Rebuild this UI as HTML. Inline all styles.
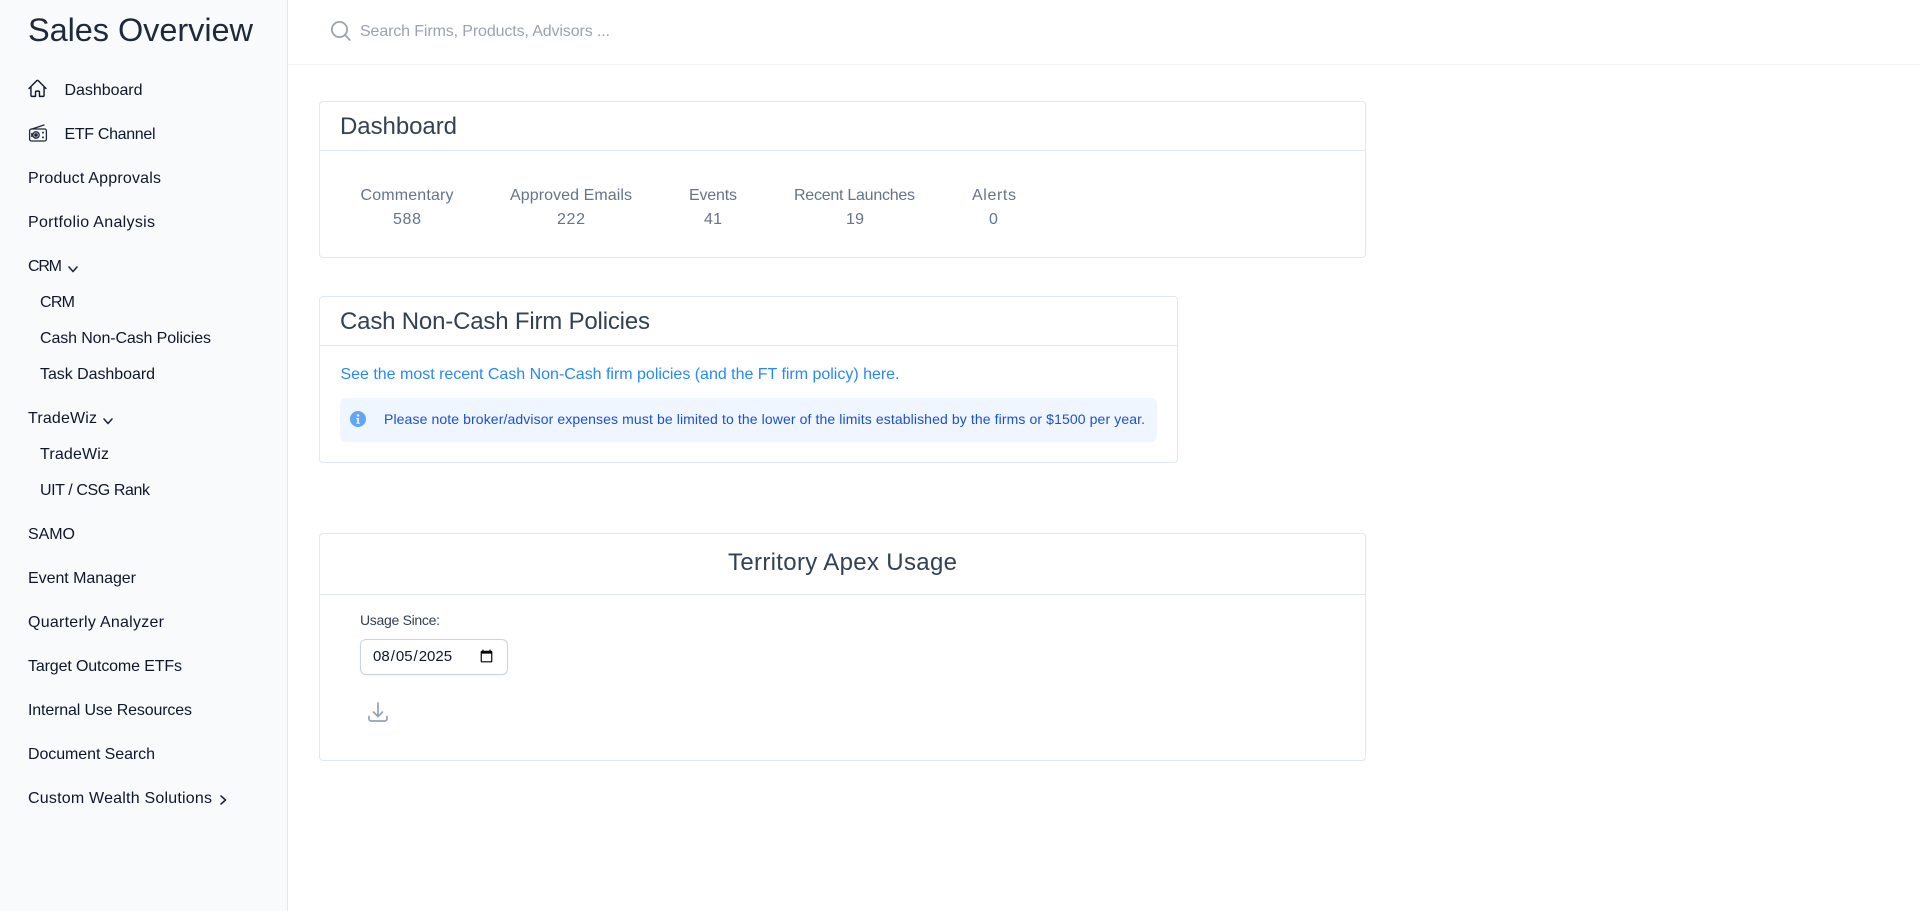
<!DOCTYPE html>
<html lang="en">
<head>
<meta charset="utf-8">
<title>Sales Overview</title>
<style>
html,body{margin:0;padding:0;width:1920px;height:911px;overflow:hidden;background:#fff;font-family:"Liberation Sans",sans-serif;}
.t{position:absolute;white-space:nowrap;line-height:20px;font-size:16px;margin-top:1px;display:inline-block;text-decoration:none;}
aside{position:absolute;left:0;top:0;width:287px;height:911px;background:#f8fafc;border-right:1px solid #e2e8f0;}
aside .t{color:#0f172a;}
.topbar{position:absolute;left:288px;top:0;right:0;height:64px;border-bottom:1px solid #f1f5f9;}
.card{position:absolute;box-sizing:border-box;border:1px solid #e2e8f0;border-radius:4px;background:#fff;}
.line{position:absolute;height:1px;background:#e2e8f0;}
.h{font-size:24px;color:#334155;}
.s{color:#64748b;}
.alert{position:absolute;left:340px;top:398px;width:817px;height:44px;background:#eff6ff;border-radius:6px;}
input[type=date]{position:absolute;left:360px;top:639px;width:148px;height:36px;box-sizing:border-box;border:1px solid #cbd5e1;border-radius:6px;padding:0 11px 2px 11px;font:15px "Liberation Sans",sans-serif;color:#0f172a;background:#fff;box-shadow:0 1px 2px rgba(15,23,42,.05);outline:none;}
svg{position:absolute;overflow:visible;}
</style>
</head>
<body>
<aside>
  <span class="t" style="left:28px;top:20px;margin-top:0;font-size:32.5px;color:#1e293b;--w:225">Sales Overview</span>
  <nav>
    <svg style="left:27px;top:78px" width="21" height="21" viewBox="0 0 24 24" fill="none" stroke="#0f172a" stroke-width="1.6" stroke-linecap="round" stroke-linejoin="round"><path d="M2.25 12l8.954-8.955c.44-.439 1.152-.439 1.591 0L21.75 12M4.5 9.75v10.125c0 .621.504 1.125 1.125 1.125H9.75v-4.875c0-.621.504-1.125 1.125-1.125h2.25c.621 0 1.125.504 1.125 1.125V21h4.125c.621 0 1.125-.504 1.125-1.125V9.75"/></svg>
    <a class="t" style="left:64.5px;top:80px;--w:78">Dashboard</a>
    <svg style="left:29px;top:124px" width="18" height="18" viewBox="0 0 18 18" fill="none" stroke="#1e293b" stroke-width="1.3" stroke-linecap="round"><rect x=".6" y="5" width="16.8" height="12" rx="1.8"/><path d="M3 5L15 1"/><circle cx="7" cy="11" r="3.2"/><circle cx="7" cy="11" r="1.2" fill="#1e293b"/><path d="M2.8 9.5v3"/><circle cx="14" cy="8.6" r="1" fill="#1e293b" stroke="none"/><circle cx="14" cy="13.4" r="1" fill="#1e293b" stroke="none"/></svg>
    <a class="t" style="left:64.5px;top:124px;--w:91">ETF Channel</a>
    <a class="t" style="left:28px;top:168px;--w:133">Product Approvals</a>
    <a class="t" style="left:28px;top:212px;--w:127">Portfolio Analysis</a>
    <a class="t" style="left:28px;top:256px;--w:34">CRM</a>
    <svg style="left:68px;top:266px" width="10" height="7" viewBox="0 0 10 7" fill="none" stroke="#1e293b" stroke-width="1.6" stroke-linecap="round" stroke-linejoin="round"><path d="M1 1l4 4.5L9 1"/></svg>
    <a class="t" style="left:40px;top:292px;--w:35">CRM</a>
    <a class="t" style="left:40px;top:328px;--w:171">Cash Non-Cash Policies</a>
    <a class="t" style="left:40px;top:364px;--w:115">Task Dashboard</a>
    <a class="t" style="left:28px;top:408px;--w:69">TradeWiz</a>
    <svg style="left:103px;top:418px" width="10" height="7" viewBox="0 0 10 7" fill="none" stroke="#1e293b" stroke-width="1.6" stroke-linecap="round" stroke-linejoin="round"><path d="M1 1l4 4.5L9 1"/></svg>
    <a class="t" style="left:40px;top:444px;--w:69">TradeWiz</a>
    <a class="t" style="left:40px;top:480px;--w:110">UIT / CSG Rank</a>
    <a class="t" style="left:28px;top:524px;--w:47">SAMO</a>
    <a class="t" style="left:28px;top:568px;--w:108">Event Manager</a>
    <a class="t" style="left:28px;top:612px;--w:136">Quarterly Analyzer</a>
    <a class="t" style="left:28px;top:656px;--w:154">Target Outcome ETFs</a>
    <a class="t" style="left:28px;top:700px;--w:164">Internal Use Resources</a>
    <a class="t" style="left:28px;top:744px;--w:127">Document Search</a>
    <a class="t" style="left:28px;top:788px;--w:184">Custom Wealth Solutions</a>
    <svg style="left:219.5px;top:795px" width="7" height="10" viewBox="0 0 7 10" fill="none" stroke="#1e293b" stroke-width="1.6" stroke-linecap="round" stroke-linejoin="round"><path d="M1 1l4.5 4L1 9"/></svg>
  </nav>
</aside>

<header class="topbar"></header>
<svg style="left:330px;top:20px" width="21" height="21" viewBox="0 0 21 21" fill="none" stroke="#9ca3af" stroke-width="1.8" stroke-linecap="round"><circle cx="9.5" cy="9.5" r="7.6"/><path d="M15 15l4.8 5"/></svg>
<span class="t" style="left:360px;top:21px;color:#9ca3af;--w:250">Search Firms, Products, Advisors ...</span>

<section class="card" style="left:319px;top:101px;width:1047px;height:157px"></section>
<div class="line" style="left:319px;top:150px;width:1047px"></div>
<h2 class="t h" style="left:340px;top:117px;margin:0;font-weight:400;--w:117">Dashboard</h2>
<span class="t s" style="left:360.5px;top:185px;--w:93">Commentary</span>
<span class="t s" style="left:393px;top:209px;--w:28">588</span>
<span class="t s" style="left:510px;top:185px;--w:122">Approved Emails</span>
<span class="t s" style="left:557px;top:209px;--w:28">222</span>
<span class="t s" style="left:689px;top:185px;--w:48">Events</span>
<span class="t s" style="left:704px;top:209px;--w:18">41</span>
<span class="t s" style="left:794px;top:185px;--w:121">Recent Launches</span>
<span class="t s" style="left:846px;top:209px;--w:18">19</span>
<span class="t s" style="left:972px;top:185px;--w:44">Alerts</span>
<span class="t s" style="left:989px;top:209px">0</span>

<section class="card" style="left:319px;top:296px;width:859px;height:167px"></section>
<div class="line" style="left:319px;top:345px;width:859px"></div>
<h2 class="t h" style="left:340px;top:312px;margin:0;font-weight:400;--w:310">Cash Non-Cash Firm Policies</h2>
<a class="t" style="left:340.5px;top:364px;color:#2589ff;--w:559">See the most recent Cash Non-Cash firm policies (and the FT firm policy) here.</a>
<div class="alert"></div>
<svg style="left:350px;top:411px" width="16" height="16" viewBox="0 0 16 16"><circle cx="8" cy="8" r="8" fill="#60a5fa"/><circle cx="8" cy="4.4" r="1.3" fill="#eff6ff"/><path d="M6.3 7h2.6v4.6h1v1.2H6.2v-1.2h1.1V8.2h-1z" fill="#eff6ff"/></svg>
<span class="t" style="left:384px;top:409px;margin-top:0;font-size:14px;color:#1d4ed8;--w:761">Please note broker/advisor expenses must be limited to the lower of the limits established by the firms or $1500 per year.</span>

<section class="card" style="left:319px;top:533px;width:1047px;height:228px"></section>
<div class="line" style="left:319px;top:594px;width:1047px"></div>
<h2 class="t h" style="left:728px;top:553px;margin:0;font-weight:400;--w:229">Territory Apex Usage</h2>
<label class="t" style="left:360px;top:610px;margin-top:0;font-size:14px;color:#334155;--w:80">Usage Since:</label>
<input type="date" value="2025-08-05">
<svg style="left:366px;top:700px" width="24" height="24" viewBox="0 0 24 24" fill="none" stroke="#94a3b8" stroke-width="1.7" stroke-linecap="round" stroke-linejoin="round"><path d="M3 16.5v2.25A2.25 2.25 0 005.25 21h13.5A2.25 2.25 0 0021 18.75V16.5M16.5 12L12 16.5m0 0L7.5 12m4.5 4.5V3"/></svg>

<script>
document.querySelectorAll('.t').forEach(function(e){
  var w=parseFloat(e.style.getPropertyValue('--w'));
  if(!w)return;
  var n=e.textContent.length;
  var m=e.getBoundingClientRect().width;
  e.style.letterSpacing=((w-m)/(n-1))+'px';
});
</script>
</body>
</html>
